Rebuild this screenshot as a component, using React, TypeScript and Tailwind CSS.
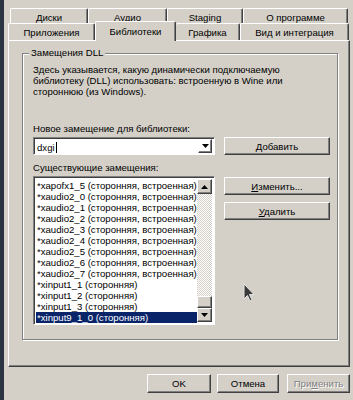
import type { ReactNode } from 'react';

const backTabs = [
  { label: 'Диски', w: 'w-[78px]' },
  { label: 'Аудио', w: 'w-[79px]' },
  { label: 'Staging', w: 'w-[76px]' },
  { label: 'О программе', w: 'w-[105px]' },
];

const overrides = [
  '*xapofx1_5 (сторонняя, встроенная)',
  '*xaudio2_0 (сторонняя, встроенная)',
  '*xaudio2_1 (сторонняя, встроенная)',
  '*xaudio2_2 (сторонняя, встроенная)',
  '*xaudio2_3 (сторонняя, встроенная)',
  '*xaudio2_4 (сторонняя, встроенная)',
  '*xaudio2_5 (сторонняя, встроенная)',
  '*xaudio2_6 (сторонняя, встроенная)',
  '*xaudio2_7 (сторонняя, встроенная)',
  '*xinput1_1 (сторонняя)',
  '*xinput1_2 (сторонняя)',
  '*xinput1_3 (сторонняя)',
  '*xinput9_1_0 (сторонняя)',
];

// classic raised 3d edge
const raised =
  'border border-t-white border-l-white border-r-[#404040] border-b-[#404040] shadow-[inset_-1px_-1px_0_#808080]';
// classic sunken field
const sunken =
  'border border-t-[#808080] border-l-[#808080] border-r-white border-b-white shadow-[inset_1px_1px_0_#404040]';

function WinButton({ children, className = '' }: { children: ReactNode; className?: string }) {
  return (
    <button className={`flex items-center justify-center bg-[#d4d0c8] ${raised} ${className}`}>
      {children}
    </button>
  );
}

function Arrow({ up }: { up?: boolean }) {
  return (
    <svg width="7" height="4" viewBox="0 0 7 4">
      <path d={up ? 'M3.5 0 L7 4 L0 4 Z' : 'M0 0 L7 0 L3.5 4 Z'} fill="#000" />
    </svg>
  );
}

export default function App() {
  return (
    <div className="flex h-[400px] w-[353px] overflow-hidden bg-[#d4d0c8] font-['Liberation_Sans',Arial,sans-serif] text-[9.6px] leading-[11px] text-black">
      <div className="w-[4px] bg-[#2b3440]" />

      <div className="relative flex flex-1 flex-col pl-[4px] pr-[3px] pt-[8px]">
        {/* back row of tabs */}
        <div className="flex h-[15px] pl-[2px]">
          {backTabs.map((t) => (
            <div
              key={t.label}
              className={`${t.w} flex items-start justify-center rounded-t-[2px] border-l border-t border-r border-l-white border-t-white border-r-[#404040] pt-[3px] shadow-[inset_-1px_0_0_#808080]`}
            >
              {t.label}
            </div>
          ))}
        </div>

        {/* front row of tabs */}
        <div className="flex h-[17px] items-start">
          <div className="flex h-[17px] w-[87px] items-center justify-center rounded-t-[2px] border-l border-t border-r border-l-white border-t-white border-r-[#404040] shadow-[inset_-1px_0_0_#808080]">
            Приложения
          </div>
          <div className="relative z-10 -mt-[2px] flex h-[20px] w-[81px] items-start justify-center rounded-t-[2px] border-l border-t border-r border-l-white border-t-white border-r-[#404040] bg-[#d4d0c8] pt-[4px] shadow-[inset_-1px_0_0_#808080]">
            Библиотеки
          </div>
          <div className="flex h-[17px] w-[64px] items-center justify-center rounded-t-[2px] border-t border-r border-t-white border-r-[#404040] shadow-[inset_-1px_0_0_#808080]">
            Графика
          </div>
          <div className="flex h-[17px] w-[109px] items-center justify-center rounded-t-[2px] border-l border-t border-r border-l-white border-t-white border-r-[#404040] shadow-[inset_-1px_0_0_#808080]">
            Вид и интеграция
          </div>
        </div>

        {/* tab page */}
        <div className={`flex h-[327px] flex-col pl-[13px] pr-[11px] pt-[6px] ${raised} border-l-white border-t-white`}>
          <fieldset className="h-[293px] border border-[#808080] shadow-[inset_1px_1px_0_#fff,1px_1px_0_#fff]">
            <legend className="ml-[6px] bg-[#d4d0c8] px-[2px] leading-[12px]">Замещения DLL</legend>

            <div className="flex flex-col pl-[10px] pr-[6px] pt-[5px]">
              <p>
                Здесь указывается, какую динамически подключаемую
                <br />
                библиотеку (DLL) использовать: встроенную в Wine или
                <br />
                стороннюю (из Windows).
              </p>

              <div className="mt-[26px]">Новое замещение для библиотеки:</div>

              <div className="mt-[3px] flex gap-[9px]">
                <div className={`flex h-[18px] w-[182px] items-center bg-white pl-[3px] pr-[2px] ${sunken}`}>
                  <span className="flex-1">
                    dxgi<span className="ml-[1px] inline-block h-[11px] w-[1px] translate-y-[2px] bg-black" />
                  </span>
                  <div className={`flex h-[14px] w-[14px] items-center justify-center ${raised}`}>
                    <Arrow />
                  </div>
                </div>
                <WinButton className="h-[18px] w-[106px]">
                  <span>
                    <u>Д</u>обавить
                  </span>
                </WinButton>
              </div>

              <div className="mt-[7px]">Существующие замещения:</div>

              <div className="mt-[3px] flex gap-[9px]">
                <div className={`flex h-[149px] w-[182px] bg-white p-[2px] ${sunken}`}>
                  <div className="flex flex-1 flex-col pt-[1px]">
                    {overrides.map((o, i) => (
                      <div
                        key={o}
                        className={`h-[11px] whitespace-nowrap pl-[1px] ${
                          i === overrides.length - 1 ? 'bg-[#0a246a] text-white' : ''
                        }`}
                      >
                        {o}
                      </div>
                    ))}
                  </div>
                  <div className="flex w-[15px] flex-col">
                    <div className={`flex h-[15px] items-center justify-center bg-[#d4d0c8] ${raised}`}>
                      <Arrow up />
                    </div>
                    <div className="flex-1 bg-[repeating-conic-gradient(#d4d0c8_0_25%,#fff_0_50%)] bg-[length:2px_2px]" />
                    <div className={`h-[12px] bg-[#d4d0c8] ${raised}`} />
                    <div className={`flex h-[14px] items-center justify-center bg-[#d4d0c8] ${raised}`}>
                      <Arrow />
                    </div>
                  </div>
                </div>

                <div className="flex w-[106px] flex-col gap-[7px] pt-[1px]">
                  <WinButton className="h-[18px]">
                    <span>
                      <u>И</u>зменить...
                    </span>
                  </WinButton>
                  <WinButton className="h-[18px]">
                    <span>
                      <u>У</u>далить
                    </span>
                  </WinButton>
                </div>
              </div>
            </div>
          </fieldset>
        </div>

        {/* dialog buttons */}
        <div className="mt-[7px] flex justify-end">
          <WinButton className="h-[19px] w-[64px]">OK</WinButton>
          <WinButton className="ml-[6px] h-[19px] w-[62px]">Отмена</WinButton>
          <WinButton className="ml-[8px] h-[19px] w-[63px] text-[#808080] [text-shadow:1px_1px_0_#fff]">
            <span>
              При<u>м</u>енить
            </span>
          </WinButton>
        </div>

        {/* mouse pointer */}
        <svg className="absolute left-[239px] top-[283px]" width="12" height="19" viewBox="0 0 12 19">
          <path
            d="M1 1 L1 16 L4.5 12.5 L7 18 L9 17 L6.5 11.5 L11 11.5 Z"
            fill="#3a3a3a"
            stroke="#e6e6e6"
            strokeWidth="1"
            strokeLinejoin="round"
          />
        </svg>
      </div>
    </div>
  );
}
